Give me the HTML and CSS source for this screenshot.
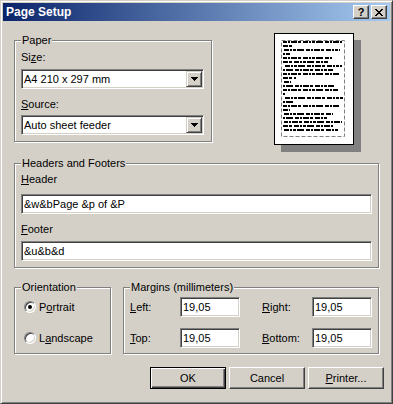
FILE: index.html
```html
<!DOCTYPE html>
<html lang="en">
  <head>
    <meta charset="UTF-8" />
    <title>Page Setup</title>
    <link rel="stylesheet" href="styles.css">
  </head>
  <body>
    <div class="dialog">
      <div class="titlebar">
        <span class="title">Page Setup</span>
        <div class="caption-buttons">
          <span class="caption-btn help">?</span>
          <span class="caption-btn close">
            <svg width="8" height="7" viewBox="0 0 8 7">
              <path d="M0 0h2v1h-2z M6 0h2v1h-2z M1 1h2v1h-2z M5 1h2v1h-2z M2 2h4v1h-4z M3 3h2v1h-2z M2 4h4v1h-4z M1 5h2v1h-2z M5 5h2v1h-2z M0 6h2v1h-2z M6 6h2v1h-2z" fill="#000"/>
            </svg>
          </span>
        </div>
      </div>

      <div class="content">
        <div class="top-row">
          <fieldset class="group paper">
            <legend>Paper</legend>
            <div class="field-label size-label">Si<u>z</u>e:</div>
            <div class="combo">
              <span class="combo-text">A4 210 x 297 mm</span>
              <span class="combo-btn">
                <svg width="7" height="4" viewBox="0 0 7 4"><path d="M0 0h7v1h-7z M1 1h5v1h-5z M2 2h3v1h-3z M3 3h1v1h-1z" fill="#000"/></svg>
              </span>
            </div>
            <div class="field-label source-label"><u>S</u>ource:</div>
            <div class="combo">
              <span class="combo-text">Auto sheet feeder</span>
              <span class="combo-btn">
                <svg width="7" height="4" viewBox="0 0 7 4"><path d="M0 0h7v1h-7z M1 1h5v1h-5z M2 2h3v1h-3z M3 3h1v1h-1z" fill="#000"/></svg>
              </span>
            </div>
          </fieldset>

          <div class="preview">
            <svg width="87" height="119" viewBox="0 0 87 119">
              <rect x="7" y="7" width="80" height="112" fill="#808080"/>
              <rect x="0.5" y="0.5" width="79" height="111" fill="#fff" stroke="#000"/>
              <rect x="7.5" y="7.5" width="63" height="96" fill="none" stroke="#808080" stroke-dasharray="4 2"/>
              <g stroke="#000" stroke-width="2" stroke-dasharray="4 1 2 1 6 1 3 2 5 1 2 1 3 1 7 2">
                <path d="M9 9h59 M9 25h50 M9 41h56 M9 57h55 M9 73h57 M10 89h58"/>
                <path stroke-dashoffset="9" d="M9 13h11 M9 29h45 M9 45h13 M9 61h2 M9 77h7 M9 93h50"/>
                <path stroke-dashoffset="19" d="M9 17h57 M10 33h58 M9 49h8 M10 65h59 M9 81h50 M9 97h56"/>
                <path stroke-dashoffset="30" d="M9 21h7 M9 37h50 M9 53h51 M9 69h11 M9 85h45"/>
              </g>
            </svg>
          </div>
        </div>

        <fieldset class="group headers">
          <legend>Headers and Footers</legend>
          <div class="field-label header-label"><u>H</u>eader</div>
          <input class="textbox wide header-input" type="text" value="&amp;w&amp;bPage &amp;p of &amp;P">
          <div class="field-label footer-label"><u>F</u>ooter</div>
          <input class="textbox wide footer-input" type="text" value="&amp;u&amp;b&amp;d">
        </fieldset>

        <div class="bottom-row">
          <fieldset class="group orientation">
            <legend>Orientation</legend>
            <div class="radio-row">
              <span class="radio checked"></span>
              <span>P<u>o</u>rtrait</span>
            </div>
            <div class="radio-row">
              <span class="radio"></span>
              <span>L<u>a</u>ndscape</span>
            </div>
          </fieldset>

          <fieldset class="group margins">
            <legend>Margins (millimeters)</legend>
            <div class="margin-grid">
              <span><u>L</u>eft:</span>
              <input class="textbox small" type="text" value="19,05">
              <span><u>R</u>ight:</span>
              <input class="textbox small" type="text" value="19,05">
              <span><u>T</u>op:</span>
              <input class="textbox small" type="text" value="19,05">
              <span><u>B</u>ottom:</span>
              <input class="textbox small" type="text" value="19,05">
            </div>
          </fieldset>
        </div>

        <div class="buttons">
          <button class="btn default">OK</button>
          <button class="btn">Cancel</button>
          <button class="btn"><u>P</u>rinter...</button>
        </div>
      </div>
    </div>
  </body>
</html>
```

FILE: styles.css
```css
body {
  margin: 0;
  font-family: "Liberation Sans", Arial, sans-serif;
  font-size: 11px;
  color: #000;
}
.dialog {
  box-sizing: border-box;
  width: 393px;
  height: 404px;
  padding: 2px;
  background: #d4d0c8;
  border: 1px solid;
  border-color: #d4d0c8 #404040 #404040 #d4d0c8;
  box-shadow: inset 1px 1px 0 #fff, inset -1px -1px 0 #808080;
}
.titlebar {
  display: flex;
  align-items: center;
  justify-content: space-between;
  height: 18px;
  padding: 0 3px 0 3px;
  background: linear-gradient(to right, #0a246a, #a6caf0);
}
.title {
  color: #fff;
  font-weight: bold;
  font-size: 12px;
}
.caption-buttons {
  display: flex;
  gap: 2px;
}
.caption-btn {
  box-sizing: border-box;
  display: flex;
  align-items: center;
  justify-content: center;
  width: 16px;
  height: 14px;
  background: #d4d0c8;
  border: 1px solid;
  border-color: #fff #404040 #404040 #fff;
  box-shadow: inset -1px -1px 0 #808080;
}
.help {
  font-weight: bold;
  font-size: 11px;
  line-height: 12px;
}
.content {
  padding: 12px 11px 0 11px;
}
.top-row {
  display: flex;
  align-items: flex-start;
}
.group {
  box-sizing: border-box;
  margin: 0;
  padding: 0 6px 6px 6px;
  min-width: 0;
  border: 1px solid #808080;
  box-shadow: 1px 1px 0 #fff, inset 1px 1px 0 #fff;
}
.group legend {
  padding: 0 1px;
  line-height: 13px;
  background: #d4d0c8;
}
.paper {
  width: 198px;
  margin-top: 1px;
  padding-right: 7px;
}
.field-label {
  line-height: 13px;
}
.size-label {
  margin-top: 4px;
  margin-bottom: 5px;
}
.source-label {
  margin-top: 9px;
  margin-bottom: 4px;
}
.combo {
  box-sizing: border-box;
  display: flex;
  width: 183px;
  height: 20px;
  padding: 1px;
  background: #fff;
  border: 1px solid;
  border-color: #808080 #fff #fff #808080;
  box-shadow: inset 1px 1px 0 #404040, inset -1px -1px 0 #d4d0c8;
}
.combo-text {
  flex: 1;
  padding-left: 1px;
  line-height: 16px;
}
.combo-btn {
  box-sizing: border-box;
  display: flex;
  align-items: center;
  justify-content: center;
  width: 16px;
  height: 16px;
  background: #d4d0c8;
  border: 1px solid;
  border-color: #d4d0c8 #404040 #404040 #d4d0c8;
  box-shadow: inset 1px 1px 0 #fff, inset -1px -1px 0 #808080;
}
.preview {
  margin-left: 62px;
  height: 119px;
}
.preview svg {
  display: block;
}
.headers {
  margin-top: 5px;
}
.header-label {
  margin-top: 3px;
  margin-bottom: 8px;
}
.footer-label {
  margin-top: 9px;
  margin-bottom: 5px;
}
.textbox {
  box-sizing: border-box;
  display: block;
  height: 20px;
  margin: 0;
  padding: 0 2px;
  font: inherit;
  color: #000;
  background: #fff;
  border: 1px solid;
  border-color: #808080 #fff #fff #808080;
  box-shadow: inset 1px 1px 0 #404040, inset -1px -1px 0 #d4d0c8;
  outline: none;
}
.wide {
  width: 351px;
}
.small {
  width: 60px;
}
.bottom-row {
  display: flex;
  margin-top: 13px;
}
.orientation {
  width: 97px;
  padding: 3px 6px 5px 9px;
}
.orientation legend {
  margin-left: -3px;
}
.radio-row {
  display: flex;
  align-items: center;
  gap: 3px;
  height: 20px;
}
.radio-row + .radio-row {
  margin-top: 11px;
}
.radio {
  box-sizing: border-box;
  display: flex;
  align-items: center;
  justify-content: center;
  width: 12px;
  height: 12px;
  border-radius: 50%;
  background: #fff;
  border: 1px solid;
  border-color: #808080 #fff #fff #808080;
  box-shadow: inset 1px 1px 0 #404040, inset -1px -1px 0 #d4d0c8;
}
.radio.checked::after {
  content: "";
  width: 4px;
  height: 4px;
  border-radius: 50%;
  background: #000;
}
.margins {
  width: 256px;
  margin-left: 12px;
  padding: 3px 6px 5px 6px;
}
.margin-grid {
  display: grid;
  grid-template-columns: 50px 82px 50px 60px;
  grid-auto-rows: 20px;
  row-gap: 11px;
  align-items: center;
}
.buttons {
  display: flex;
  justify-content: flex-end;
  gap: 3px;
  margin-top: 13px;
  margin-right: -5px;
}
.btn {
  box-sizing: border-box;
  width: 76px;
  height: 22px;
  padding: 0;
  font: inherit;
  color: #000;
  background: #d4d0c8;
  border: 1px solid;
  border-color: #fff #404040 #404040 #fff;
  box-shadow: inset -1px -1px 0 #808080;
}
.btn.default {
  border-color: #000;
  box-shadow: inset 1px 1px 0 #fff, inset -1px -1px 0 #404040, inset -2px -2px 0 #808080;
}
```
